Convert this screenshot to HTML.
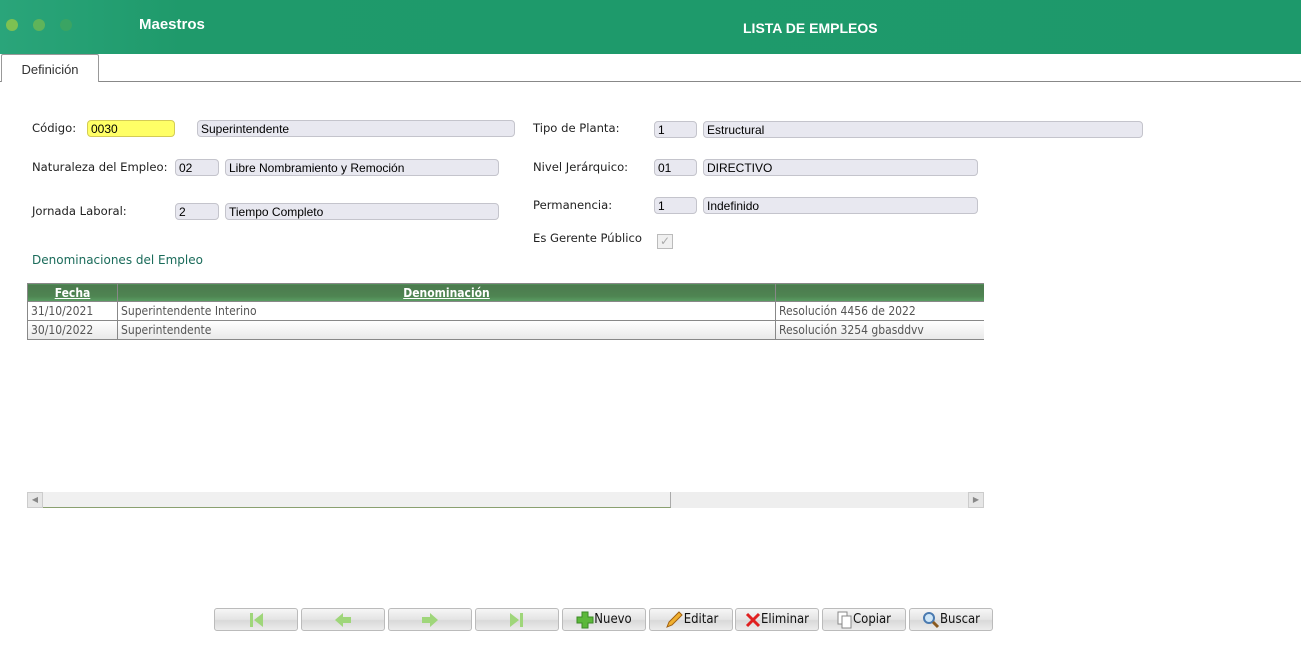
<!DOCTYPE html>
<html><head><meta charset="utf-8"><style>
*{box-sizing:border-box;margin:0;padding:0}
body{width:1301px;height:661px;position:relative;background:#fff;font-family:"DejaVu Sans","Liberation Sans",sans-serif;font-size:12px;color:#222;overflow:hidden}
.a{position:absolute}
.hdr{left:0;top:0;width:1301px;height:54px;background:linear-gradient(90deg,#2aa57a 0,#1f9a6b 180px,#1d996b 100%)}
.dot{width:12px;height:12px;border-radius:50%;top:19px}
.ht{color:#fff;font-weight:bold;font-family:"Liberation Sans",sans-serif;font-size:15px}
.lbl{font-size:11.6px;color:#222}
.in{height:17px;background:#e8e8f0;border:1px solid #c4c4cc;border-radius:4px;font-family:"Liberation Sans",sans-serif;font-size:12px;padding:1px 0 0 3px;line-height:14px;color:#000}
table{border-collapse:collapse;font-size:12px;font-family:"DejaVu Sans Condensed","DejaVu Sans",sans-serif}
td{border:1px solid #888;height:19px;padding:0 3px;color:#555;white-space:nowrap}
th{height:18px;background:linear-gradient(#4b7a4e,#4f8552 70%,#5aa064);color:#fff;border:1px solid #888;text-decoration:underline;font-weight:bold}
.btn{top:608px;width:84px;height:23px;border:1px solid #bbb;border-radius:3px;background:linear-gradient(#f6f6f6,#e4e4e4 50%,#d9d9d9 55%,#ececec);font-family:"DejaVu Sans Condensed",sans-serif;font-size:13px;display:flex;align-items:center;justify-content:center;color:#111}
</style></head><body>
<div class="a hdr"></div>
<div class="a dot" style="left:6px;background:#7dc152"></div>
<div class="a dot" style="left:33px;background:#5fb45a"></div>
<div class="a dot" style="left:60px;background:#3aa463"></div>
<div class="a ht" style="left:139px;top:16px">Maestros</div>
<div class="a ht" style="left:743px;top:20px;font-size:14px">LISTA DE EMPLEOS</div>
<div class="a" style="left:0;top:81px;width:1301px;height:1px;background:#888"></div>
<div class="a" style="left:1px;top:54px;width:98px;height:28px;border:1px solid #999;border-bottom:none;background:#fff;border-radius:2px 2px 0 0;text-align:center;padding-top:7px;font-family:'Liberation Sans',sans-serif;font-size:13px;color:#333">Definición</div>

<div class="a lbl" style="left:32px;top:121px">Código:</div>
<div class="a in" style="left:87px;top:120px;width:88px;background:#ffff66;border-color:#d4cc55">0030</div>
<div class="a in" style="left:197px;top:120px;width:318px">Superintendente</div>
<div class="a lbl" style="left:32px;top:160px">Naturaleza del Empleo:</div>
<div class="a in" style="left:175px;top:159px;width:44px">02</div>
<div class="a in" style="left:225px;top:159px;width:274px">Libre Nombramiento y Remoción</div>
<div class="a lbl" style="left:32px;top:204px">Jornada Laboral:</div>
<div class="a in" style="left:175px;top:203px;width:44px">2</div>
<div class="a in" style="left:225px;top:203px;width:274px">Tiempo Completo</div>

<div class="a lbl" style="left:533px;top:121px">Tipo de Planta:</div>
<div class="a in" style="left:654px;top:121px;width:43px">1</div>
<div class="a in" style="left:703px;top:121px;width:440px">Estructural</div>
<div class="a lbl" style="left:533px;top:160px">Nivel Jerárquico:</div>
<div class="a in" style="left:654px;top:159px;width:43px">01</div>
<div class="a in" style="left:703px;top:159px;width:275px">DIRECTIVO</div>
<div class="a lbl" style="left:533px;top:198px">Permanencia:</div>
<div class="a in" style="left:654px;top:197px;width:43px">1</div>
<div class="a in" style="left:703px;top:197px;width:275px">Indefinido</div>
<div class="a lbl" style="left:533px;top:231px">Es Gerente Público</div>
<div class="a" style="left:657px;top:234px;width:16px;height:15px;border:1px solid #bbb;background:#f0f0f0;color:#aaa;font-size:12px;text-align:center;line-height:13px">✓</div>
<div class="a" style="left:32px;top:253px;color:#1a6b5a;font-size:12px">Denominaciones del Empleo</div>

<div class="a" style="left:27px;top:283px;width:957px;height:60px;overflow:hidden">
<table style="width:970px">
<tr><th style="width:90px">Fecha</th><th style="width:658px">Denominación</th><th style="text-decoration:none"></th></tr>
<tr><td>31/10/2021</td><td>Superintendente Interino</td><td>Resolución 4456 de 2022</td></tr>
<tr style="background:linear-gradient(#fff,#e8e8e8)"><td>30/10/2022</td><td>Superintendente</td><td>Resolución 3254 gbasddvv</td></tr>
</table></div>

<div class="a" style="left:27px;top:492px;width:957px;height:16px;background:#eee"></div>
<div class="a" style="left:27px;top:492px;width:16px;height:16px;background:#e6e6e6;border:1px solid #ccc;color:#888;font-size:8px;text-align:center;line-height:14px">◀</div>
<div class="a" style="left:43px;top:492px;width:628px;height:16px;background:#f0f0f0;border-right:1px solid #aaa;border-bottom:1px solid #8aa070"></div>
<div class="a" style="left:968px;top:492px;width:16px;height:16px;background:#e6e6e6;border:1px solid #ccc;color:#888;font-size:8px;text-align:center;line-height:14px">▶</div>

<div class="a btn" style="left:214px"><svg width="18" height="18"><rect x="3" y="2" width="3" height="14" fill="#9fd67a"/><path d="M16 2 L7 9 L16 16Z" fill="#9fd67a"/></svg></div>
<div class="a btn" style="left:301px"><svg width="20" height="18"><path d="M2 9 L10 2 V6 H18 V12 H10 V16Z" fill="#9fd67a"/></svg></div>
<div class="a btn" style="left:388px"><svg width="20" height="18"><path d="M18 9 L10 2 V6 H2 V12 H10 V16Z" fill="#9fd67a"/></svg></div>
<div class="a btn" style="left:475px"><svg width="18" height="18"><path d="M2 2 L11 9 L2 16Z" fill="#9fd67a"/><rect x="12" y="2" width="3" height="14" fill="#9fd67a"/></svg></div>
<div class="a btn" style="left:562px"><svg width="18" height="18"><path d="M6 1H12V6H17V12H12V17H6V12H1V6H6Z" fill="#5cb83a" stroke="#3b8a25"/></svg>Nuevo</div>
<div class="a btn" style="left:649px"><svg width="20" height="18"><path d="M3 16 L5 11 L15 1 L18 4 L8 14Z" fill="#f0b030" stroke="#a06010"/></svg>Editar</div>
<div class="a btn" style="left:735px"><svg width="16" height="16"><path d="M2 2L14 14M14 2L2 14" stroke="#e02020" stroke-width="3"/></svg>Eliminar</div>
<div class="a btn" style="left:822px"><svg width="16" height="18"><rect x="1" y="1" width="9" height="12" fill="#fff" stroke="#888"/><rect x="5" y="5" width="9" height="12" fill="#fff" stroke="#888"/></svg>Copiar</div>
<div class="a btn" style="left:909px"><svg width="18" height="18"><circle cx="7" cy="7" r="5" fill="#cfe6f7" stroke="#4a7ab0" stroke-width="2"/><path d="M11 11L16 16" stroke="#8a5a20" stroke-width="3"/></svg>Buscar</div>
</body></html>
